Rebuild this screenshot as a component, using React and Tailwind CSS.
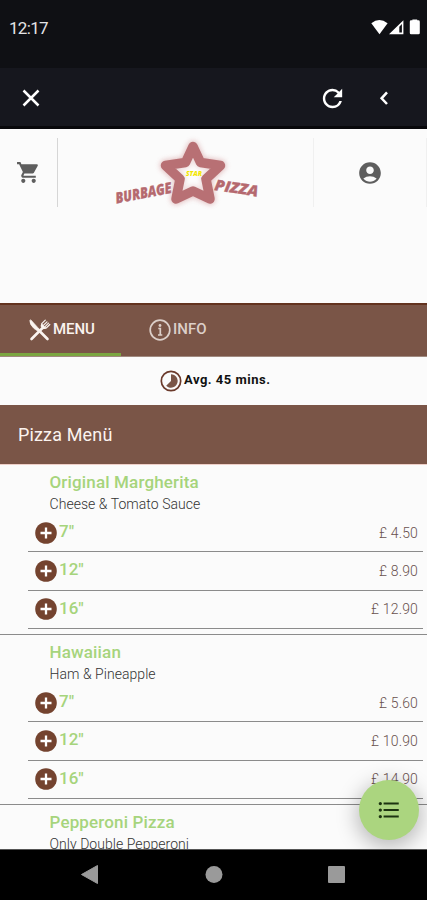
import React from "react";
import { MdShoppingCart, MdAccountCircle, MdRefresh, MdFormatListBulleted } from "react-icons/md";

const MENU = [
  { name: "Original Margherita", desc: "Cheese & Tomato Sauce", sizes: [['7"', "4.50"], ['12"', "8.90"], ['16"', "12.90"]] },
  { name: "Hawaiian", desc: "Ham & Pineapple", sizes: [['7"', "5.60"], ['12"', "10.90"], ['16"', "14.90"]] },
  { name: "Pepperoni Pizza", desc: "Only Double Pepperoni", sizes: [] },
];

function StatusBar() {
  return (
    <div className="flex h-[68px] shrink-0 items-start justify-between bg-[#0f1014] pr-[7px] pl-[9px] pt-[17px] text-[#e4e4e6]">
      <span className="text-[17px] leading-[22px] tracking-[-0.7px]">12:17</span>
      <svg width="50" height="20" viewBox="370 17 50 20" className="text-white" fill="currentColor">
        <path d="M371.3 23.2Q379.3 16.8 387.6 23.2L379.5 34.3Z" />
        <path fillRule="evenodd" d="M389 34.3L403.4 20.3V34.3ZM399.3 26.8V32.6H401.9V24Z" />
        <path d="M412.4 20.3V19.6h4.8v.7h1.2q1.4 0 1.4 1.4v11.2q0 1.4-1.4 1.4h-7.3q-1.3 0-1.3-1.4V21.700q0-1.4 1.3-1.4z" />
      </svg>
    </div>
  );
}

function Toolbar() {
  return (
    <div className="flex h-[61px] shrink-0 items-center border-b-[3px] border-[#08080b] bg-[#16171e] pt-[2px] pl-[18px] text-white">
      <svg width="26" height="26" viewBox="0 0 26 26" fill="none" stroke="currentColor" strokeWidth="2.5">
        <path d="M5.500 5.500L20.500 20.500M20.500 5.500L5.500 20.500" />
      </svg>
      <MdRefresh size={29} className="ml-[274px]" />
      <svg width="20" height="20" viewBox="0 0 20 20" className="ml-[27px]" fill="none" stroke="currentColor" strokeWidth="2.5">
        <path d="M13 4.400L7.600 10.300L13 16" />
      </svg>
    </div>
  );
}

function Logo() {
  const star = "M93 14.500L100.500 30.500L120.500 33.500L106 47L110 67L93 59L76 67L80 47L65.500 33.500L85.500 30.500Z";
  return (
    <svg width="170" height="80" viewBox="0 0 170 80" className="font-['Open_Sans',sans-serif]">
      <defs>
        <filter id="glow" x="-30%" y="-30%" width="160%" height="160%">
          <feGaussianBlur stdDeviation="2.6" />
        </filter>
      </defs>
      <path d={star} fill="#e6c3c2" stroke="#e0b4b4" strokeWidth="10" strokeLinejoin="round" filter="url(#glow)" opacity=".5" />
      <path d={star} fill="#fdfdfd" />
      <path d={star} fill="none" stroke="#dcaeb0" strokeWidth="12" strokeLinejoin="round" filter="url(#glow)" opacity=".45" />
      <path d={star} fill="none" stroke="#b87074" strokeWidth="9.500" strokeLinejoin="round" />
      <text x="86" y="44" fontSize="6.500" fontWeight="800" fontStyle="italic" fill="#f3e600" textLength="16" lengthAdjust="spacingAndGlyphs">STAR</text>
      <g fill="#b5696f" stroke="#b5696f" strokeWidth=".3" fontSize="15" fontWeight="800" fontStyle="italic">
        <text transform="translate(16.500 71.500) rotate(-11)" textLength="57" lengthAdjust="spacingAndGlyphs">BURBAGE</text>
        <text transform="translate(114 58) rotate(8.500)" textLength="44" lengthAdjust="spacingAndGlyphs">PIZZA</text>
      </g>
    </svg>
  );
}

function Header() {
  return (
    <div className="flex h-[174px] shrink-0 items-start pt-[3px]">
      <div className="mt-[6px] flex h-[69px] w-[58px] items-center justify-center border-r border-[#d6d6d6] text-[#5e5e5e]">
        <MdShoppingCart size={25} />
      </div>
      <div className="flex h-20 w-[255px] pl-[42px]"><Logo /></div>
      <div className="mt-[6px] flex h-[69px] flex-1 items-center justify-center border-x border-[#f0f0f0] text-[#5e5e5e]">
        <MdAccountCircle size={26} />
      </div>
    </div>
  );
}

function Tabs() {
  return (
    <div className="flex h-[54px] shrink-0 border-t-2 border-b border-t-[#63331f] border-b-[#a08a80] bg-[#7a5547] text-[15px] leading-5 font-medium">
      <div className="flex w-[121px] items-start border-b-[3px] border-[#7ba641] pt-[14px] pl-[29px] text-[#faf3ef]">
        <svg width="22" height="22" viewBox="0 0 22 22" className="shrink-0" fill="none" stroke="currentColor" strokeLinecap="round">
          <path d="M.8 1.500Q.5 5.500 5 9.500L8.500 12L10.300 10.200L2 1Z" fill="currentColor" strokeWidth=".6" />
          <path d="M9.500 11L18.500 20" strokeWidth="2.600" />
          <path d="M2.500 20L14 8.500" strokeWidth="2.600" />
          <path d="M16.300 1.200L12.800 4.700Q11.800 7 13.400 8.500Q15.200 10 17.300 9L20.800 5.500M18 2.800L14.600 6.200M19.500 4.200L16.100 7.600" strokeWidth="1.200" />
          <path d="M13 5L17 9L14.500 9.800L12.200 7.500Z" fill="currentColor" strokeWidth=".5" />
        </svg>
        <span className="ml-[2px] tracking-[-0.1px]">MENU</span>
      </div>
      <div className="flex items-start pt-[14px] pl-[28px] text-[#dccfc9]">
        <svg width="22" height="22" viewBox="0 0 22 22" className="shrink-0" fill="none" stroke="currentColor">
          <circle cx="11" cy="11" r="9.800" strokeWidth="1.700" />
          <circle cx="11" cy="6.500" r="1.400" fill="currentColor" stroke="none" />
          <path d="M9.300 9.500H11.300V16M9 16H13.300" strokeWidth="1.700" />
        </svg>
        <span className="ml-[2px]">INFO</span>
      </div>
    </div>
  );
}

function DeliveryTime() {
  return (
    <div className="flex h-12 shrink-0 items-center pb-[2px] pl-[160px]">
      <svg width="22" height="22" viewBox="0 0 22 22" className="mt-[2px]">
        <circle cx="11" cy="11" r="9.700" fill="none" stroke="#6b3a2b" strokeWidth="1.700" />
        <path d="M11 4.300A6.700 6.700 0 1 1 6.200 15.700L11 11Z" fill="#7a5547" />
      </svg>
      <span className="ml-[2px] text-[13px] font-bold tracking-[0.5px] text-[#111]">Avg. 45 mins.</span>
    </div>
  );
}

function SizeRow({ size, price }) {
  return (
    <div className="ml-[28px] mr-[4px] flex h-[38.3px] items-center border-b-[1.500px] border-[#8b8b8b] pl-[7px] pr-[5px]">
      <svg width="22" height="22" viewBox="0 0 22 22">
        <circle cx="11" cy="11" r="10.800" fill="#74432f" />
        <path d="M11 5.500V16.500M5.500 11H16.500" stroke="#fff" strokeWidth="2.300" />
      </svg>
      <span className="mb-[3px] ml-[2px] text-[17px] leading-5 font-medium text-[#a6d47c]">{size}</span>
      <span className="ml-auto text-[14px] leading-5 font-light tracking-[0.15px] text-[#69514e]">£ {price}</span>
    </div>
  );
}

function MenuItem({ item }) {
  return (
    <div className="h-[170px] shrink-0 border-b-[1.500px] border-[#8b8b8b] pt-[6px]">
      <h2 className="pl-[49.500px] text-[17px] leading-[22px] font-medium tracking-[0.15px] text-[#a6d47c]">{item.name}</h2>
      <p className="pl-[49.5px] text-[14px] leading-[22px] font-light tracking-[0.05px] text-[#333]">{item.desc}</p>
      <div className="-mt-px">
        {item.sizes.map(([size, price]) => <SizeRow key={size} size={size} price={price} />)}
      </div>
    </div>
  );
}

function NavBar() {
  return (
    <div className="flex h-[51px] shrink-0 items-center border-t border-[#555] bg-black text-[#9a9a9a]">
      <svg width="427" height="50" viewBox="0 850 427 50" fill="currentColor">
        <path d="M97.500 865.500V883.500L81.500 874.500Z" stroke="currentColor" strokeLinejoin="round" />
        <circle cx="214" cy="874.500" r="8.500" />
        <rect x="328" y="866" width="17" height="17" rx="1" />
      </svg>
    </div>
  );
}

export default function App() {
  return (
    <div className="relative flex h-[900px] w-[427px] flex-col overflow-hidden bg-[#fbfbfb] font-[Roboto,sans-serif]">
      <StatusBar />
      <Toolbar />
      <Header />
      <Tabs />
      <DeliveryTime />
      <div className="flex h-[60px] shrink-0 items-center border-b border-[#eecfc8] bg-[#7a5547] pl-[18px] text-lg tracking-[0.15px] text-[#fbf3ef]">
        Pizza Menü
      </div>
      <div className="flex min-h-0 flex-1 flex-col overflow-hidden">
        {MENU.map((item) => <MenuItem key={item.name} item={item} />)}
      </div>
      <button className="absolute top-[780px] left-[359px] flex size-[60px] items-center justify-center rounded-full bg-[#abd57f] text-[#1c3310] shadow-[0_5px_20px_3px_rgba(0,0,0,0.25)]">
        <MdFormatListBulleted size={26} />
      </button>
      <div className="relative shrink-0"><NavBar /></div>
    </div>
  );
}
